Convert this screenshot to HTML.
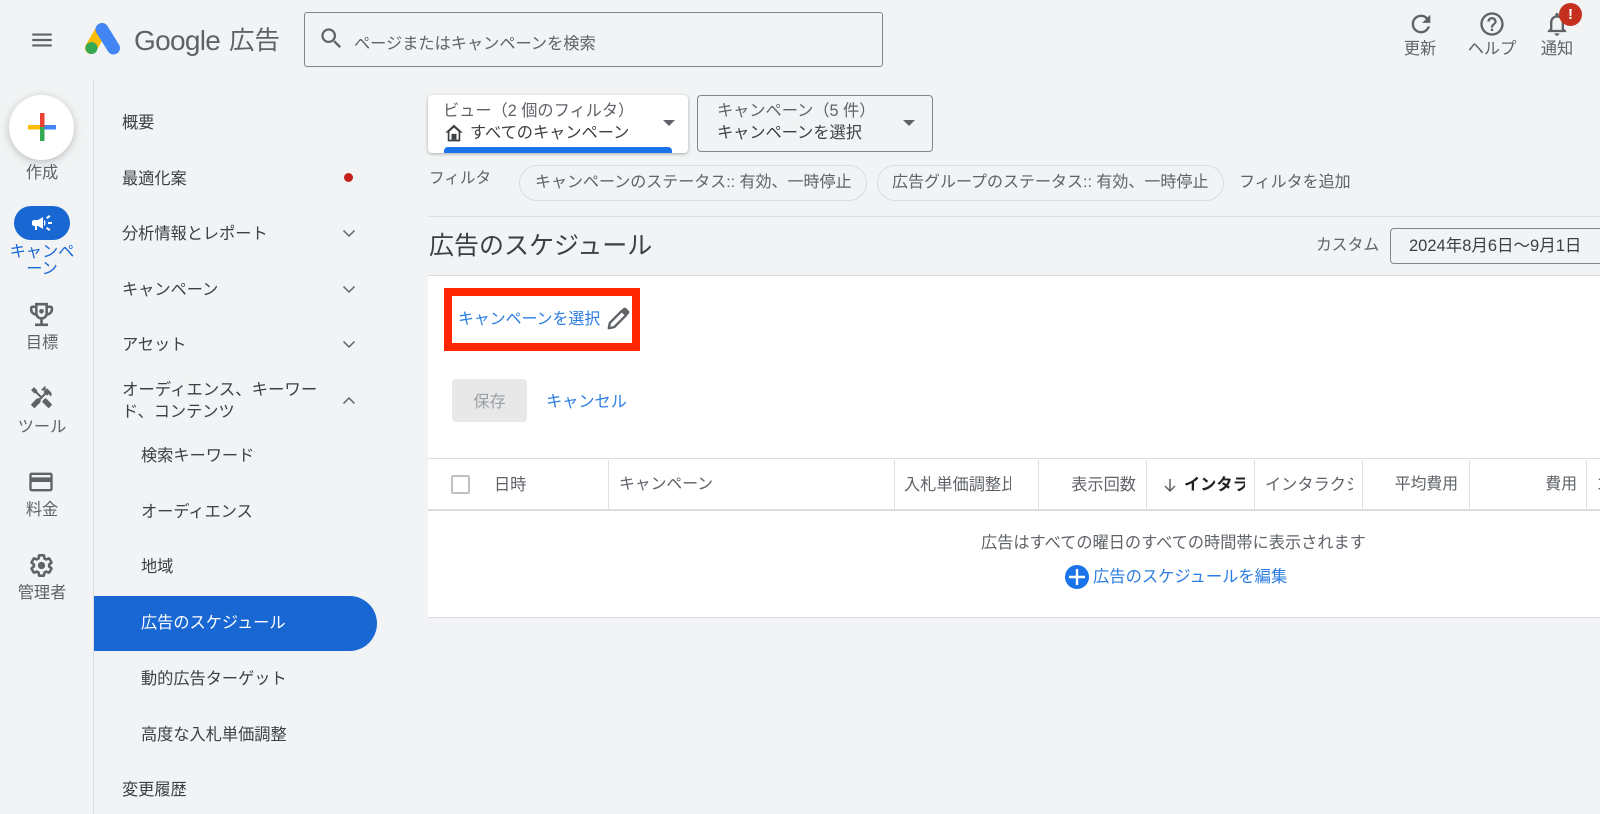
<!DOCTYPE html>
<html lang="ja"><head><meta charset="utf-8"><title>Google 広告</title>
<style>
html,body{margin:0;padding:0;width:1600px;height:814px;overflow:hidden;background:#f1f3f4}
body{position:relative;font-family:"Liberation Sans","Noto Sans CJK JP",sans-serif;font-size:16.2px;color:#3c4043}
.t{position:absolute;line-height:20px;height:20px;white-space:nowrap;margin-top:1px}
.b{position:absolute;box-sizing:border-box}
.g{color:#5f6368}.l{color:#2b7de2}
.c{text-align:center}
svg{position:absolute;display:block}
.sep{position:absolute;top:460px;height:50px;width:1px;background:#e0e0e0}
.h{position:absolute;top:476px;line-height:20px;height:20px;white-space:nowrap;overflow:hidden;color:#5f6368}
</style></head><body>

<svg style="left:29px;top:27px" width="26" height="26" viewBox="0 0 24 24" fill="#5f6368"><path d="M3 18h18v-2H3v2zm0-5h18v-2H3v2zm0-7v2h18V6H3z"/></svg>
<svg style="left:81px;top:20px" width="42" height="38" viewBox="80 20 42 38" fill="none" stroke-linecap="round">
<path d="M101 29L90 48" stroke="#fbbc04" stroke-width="12"/><path d="M101 29.500L112.500 48" stroke="#4285f4" stroke-width="13"/><circle cx="90.500" cy="48" r="6" fill="#34a853"/></svg>
<div class="t g" style="left:134px;top:25px;height:30px;line-height:30px;font-size:28px;letter-spacing:-.7px">Google</div>
<div class="t g" style="left:229px;top:25px;height:30px;line-height:30px;font-size:25.500px">広告</div>

<div class="b" style="left:304px;top:12px;width:579px;height:55px;border:1px solid #80868b;border-radius:3px"></div>
<svg style="left:318px;top:25px" width="27" height="27" viewBox="0 0 24 24" fill="#5f6368"><path d="M15.500 14h-.79l-.28-.27A6.471 6.471 0 0 0 16 9.500 6.500 6.500 0 1 0 9.500 16c1.610 0 3.090-.59 4.230-1.570l.27.28v.79l5 4.990L20.490 19l-4.990-5zm-6 0C7.010 14 5 11.990 5 9.500S7.010 5 9.500 5 14 7.010 14 9.500 11.990 14 9.500 14z"/></svg>
<div class="t g" style="left:354px;top:33px;font-size:16.200px">ページまたはキャンペーンを検索</div>

<svg style="left:1407px;top:10px" width="28" height="28" viewBox="0 0 24 24" fill="#5f6368"><path d="M17.650 6.350A7.958 7.958 0 0 0 12 4c-4.420 0-7.990 3.580-7.990 8s3.570 8 7.990 8c3.730 0 6.840-2.550 7.730-6h-2.080A5.990 5.990 0 0 1 12 18c-3.310 0-6-2.690-6-6s2.690-6 6-6c1.660 0 3.140.69 4.220 1.780L13 11h7V4l-2.350 2.350z"/></svg>
<div class="t g c" style="left:1400px;width:40px;top:38px">更新</div>
<svg style="left:1478px;top:10px" width="28" height="28" viewBox="0 0 24 24" fill="#5f6368"><path d="M11 18h2v-2h-2v2zm1-16C6.480 2 2 6.480 2 12s4.480 10 10 10 10-4.480 10-10S17.520 2 12 2zm0 18c-4.410 0-8-3.590-8-8s3.590-8 8-8 8 3.590 8 8-3.590 8-8 8zm0-14c-2.210 0-4 1.790-4 4h2c0-1.100.9-2 2-2s2 .9 2 2c0 2-3 1.750-3 5h2c0-2.250 3-2.500 3-5 0-2.210-1.790-4-4-4z"/></svg>
<div class="t g c" style="left:1461px;width:62px;top:38px">ヘルプ</div>
<svg style="left:1543px;top:10px" width="28" height="28" viewBox="0 0 24 24" fill="#5f6368"><path d="M12 22c1.100 0 2-.9 2-2h-4c0 1.100.9 2 2 2zm6-6v-5c0-3.070-1.630-5.640-4.500-6.320V4c0-.83-.67-1.500-1.500-1.500s-1.500.67-1.500 1.500v.68C7.640 5.360 6 7.920 6 11v5l-2 2v1h16v-1l-2-2zm-2 1H8v-6c0-2.480 1.510-4.500 4-4.500s4 2.020 4 4.500v6z"/></svg>
<div class="b" style="left:1559px;top:3px;width:23px;height:23px;border-radius:50%;background:#c5301f;color:#fff;font-weight:bold;font-size:15px;line-height:23px;text-align:center">!</div>
<div class="t g c" style="left:1537px;width:40px;top:38px">通知</div>

<!-- rail -->
<div class="b" style="left:93px;top:80px;width:1px;height:734px;background:#dadce0"></div>
<div class="b" style="left:9px;top:95px;width:65px;height:65px;border-radius:50%;background:#fff;box-shadow:0 2px 8px rgba(60,64,67,.3)"></div>
<svg style="left:28px;top:113px" width="28" height="28" viewBox="0 0 28 28">
<rect x="0" y="12" width="14" height="4.500" fill="#fbbc04"/><rect x="14" y="12" width="14" height="4.500" fill="#4285f4"/><rect x="12" y="14" width="4.500" height="14" fill="#34a853"/><rect x="12" y="0" width="4.500" height="14" fill="#ea4335"/></svg>
<div class="t g c" style="left:0;width:84px;top:162px">作成</div>

<div class="b" style="left:14px;top:206px;width:56px;height:34px;border-radius:17px;background:#1967d2"></div>
<svg style="left:30px;top:211px" width="24" height="24" viewBox="0 0 24 24" fill="#fff"><path d="M18 11v2h4v-2h-4zm-2 6.610c.96.71 2.210 1.650 3.200 2.390.4-.53.8-1.070 1.200-1.600-.99-.74-2.240-1.680-3.200-2.400-.4.54-.8 1.080-1.200 1.610zM20.400 5.600c-.4-.53-.8-1.070-1.200-1.600-.99.74-2.240 1.680-3.200 2.400.4.53.8 1.070 1.200 1.600.96-.72 2.210-1.650 3.200-2.400zM4 9c-1.100 0-2 .9-2 2v2c0 1.100.9 2 2 2h1v4h2v-4h1l5 3V6L8 9H4zm11.500 3c0-1.330-.58-2.530-1.500-3.350v6.690c.92-.81 1.500-2.010 1.500-3.340z"/></svg>
<div class="t c" style="left:0;width:84px;top:241px;color:#1967d2">キャンペ</div>
<div class="t c" style="left:0;width:84px;top:258px;color:#1967d2">ーン</div>

<svg style="left:26px;top:299px" width="31" height="31" viewBox="0 0 24 24" fill="#5f6368"><path d="M19 5h-2V3H7v2H5c-1.100 0-2 .9-2 2v1c0 2.550 1.920 4.630 4.390 4.940.63 1.500 1.980 2.630 3.610 2.960V19H7v2h10v-2h-4v-3.100c1.630-.33 2.980-1.460 3.610-2.960C19.080 12.630 21 10.550 21 8V7c0-1.100-.9-2-2-2zM5 8V7h2v3.820C5.840 10.400 5 9.300 5 8zm7 6c-1.650 0-3-1.350-3-3V5h6v6c0 1.650-1.350 3-3 3zm7-6c0 1.300-.84 2.400-2 2.820V7h2v1z"/><circle cx="12" cy="9.500" r="1.800"/></svg>
<div class="t g c" style="left:0;width:84px;top:332px">目標</div>

<svg style="left:29px;top:385px" width="25" height="25" viewBox="0 0 24 24" fill="#5f6368"><path d="M21.670 18.170l-5.300-5.300h-.99l-2.540 2.540v.99l5.300 5.300c.39.39 1.020.39 1.410 0l2.120-2.120c.39-.38.39-1.020 0-1.410z"/><path d="M17.340 10.190l1.410-1.410 2.120 2.120c1.170-1.170 1.170-3.070 0-4.240l-3.540-3.540-1.410 1.410V1.710l-.7-.71-3.540 3.540.71.71h2.830l-1.410 1.410 1.060 1.060-2.890 2.890-4.130-4.130V5.060L4.830 2.040 2 4.870 5.030 7.900h1.410l4.130 4.130-.85.85H7.610l-5.300 5.300c-.39.39-.39 1.020 0 1.410l2.120 2.120c.39.39 1.020.39 1.410 0l5.300-5.300v-2.120l5.150-5.150 1.050 1.050z"/></svg>
<div class="t g c" style="left:0;width:84px;top:416px">ツール</div>

<svg style="left:27px;top:468px" width="28" height="28" viewBox="0 0 24 24" fill="#5f6368"><path d="M20 4H4c-1.110 0-1.990.89-1.990 2L2 18c0 1.110.89 2 2 2h16c1.110 0 2-.89 2-2V6c0-1.110-.89-2-2-2zm0 14H4v-6h16v6zm0-10H4V6h16v2z"/></svg>
<div class="t g c" style="left:0;width:84px;top:499px">料金</div>

<svg style="left:27px;top:551px" width="29" height="29" viewBox="0 0 24 24"><path fill="none" stroke="#5f6368" stroke-width="2.400" transform="translate(12 12) scale(.88) translate(-12 -12)" d="M19.140 12.940c.04-.3.06-.61.06-.94 0-.32-.02-.64-.07-.94l2.030-1.580a.49.49 0 0 0 .12-.61l-1.920-3.320a.488.488 0 0 0-.59-.22l-2.390.96c-.5-.38-1.030-.7-1.620-.94l-.36-2.540a.484.484 0 0 0-.48-.41h-3.840c-.24 0-.43.17-.47.41l-.36 2.540c-.59.24-1.130.57-1.620.94l-2.390-.96c-.22-.08-.47 0-.59.22L2.740 8.870c-.12.21-.08.47.12.61l2.030 1.580c-.05.3-.09.63-.09.94s.02.64.07.94l-2.030 1.580a.49.49 0 0 0-.12.61l1.920 3.320c.12.22.37.29.59.22l2.390-.96c.5.38 1.030.7 1.620.94l.36 2.540c.05.24.24.41.48.41h3.840c.24 0 .44-.17.47-.41l.36-2.540c.59-.24 1.130-.56 1.620-.94l2.390.96c.22.08.47 0 .59-.22l1.920-3.320c.12-.22.07-.47-.12-.61l-2.010-1.580z"/><circle cx="12" cy="12" r="3" fill="#5f6368"/></svg>
<div class="t g c" style="left:0;width:84px;top:582px">管理者</div>

<!-- nav -->
<div class="t" style="left:122px;top:112px">概要</div>
<div class="t" style="left:122px;top:168px">最適化案</div>
<div class="b" style="left:344px;top:173px;width:9px;height:9px;border-radius:50%;background:#c5221f"></div>
<div class="t" style="left:122px;top:223px">分析情報とレポート</div>
<div class="t" style="left:122px;top:279px">キャンペーン</div>
<div class="t" style="left:122px;top:334px">アセット</div>
<div class="t" style="left:122px;top:379px;font-size:16.400px">オーディエンス、キーワー</div>
<div class="t" style="left:122px;top:401px">ド、コンテンツ</div>
<svg style="left:341px;top:225px" width="16" height="16" viewBox="0 0 16 16" fill="none" stroke="#5f6368" stroke-width="1.500"><path d="M2.500 5.500L8 11l5.500-5.500"/></svg>
<svg style="left:341px;top:281px" width="16" height="16" viewBox="0 0 16 16" fill="none" stroke="#5f6368" stroke-width="1.500"><path d="M2.500 5.500L8 11l5.500-5.500"/></svg>
<svg style="left:341px;top:336px" width="16" height="16" viewBox="0 0 16 16" fill="none" stroke="#5f6368" stroke-width="1.500"><path d="M2.500 5.500L8 11l5.500-5.500"/></svg>
<svg style="left:341px;top:393px" width="16" height="16" viewBox="0 0 16 16" fill="none" stroke="#5f6368" stroke-width="1.500"><path d="M2.500 10.500L8 5l5.500 5.500"/></svg>
<div class="t" style="left:141px;top:445px">検索キーワード</div>
<div class="t" style="left:141px;top:501px">オーディエンス</div>
<div class="t" style="left:141px;top:556px">地域</div>
<div class="b" style="left:94px;top:596px;width:283px;height:55px;background:#1967d2;border-radius:0 28px 28px 0"></div>
<div class="t" style="left:141px;top:612px;color:#fff">広告のスケジュール</div>
<div class="t" style="left:141px;top:668px">動的広告ターゲット</div>
<div class="t" style="left:141px;top:724px">高度な入札単価調整</div>
<div class="t" style="left:122px;top:779px">変更履歴</div>

<!-- view cards -->
<div class="b" style="left:428px;top:95px;width:260px;height:58px;background:#fff;border-radius:4px;box-shadow:0 1px 3px rgba(60,64,67,.4);overflow:hidden"><div class="b" style="left:16px;top:52px;width:228px;height:6px;background:#1a73e8;border-radius:4px 4px 0 0"></div></div>
<div class="t g" style="left:443px;top:100px">ビュー（2 個のフィルタ）</div>
<svg style="left:444px;top:123px" width="20" height="20" viewBox="0 0 24 24" fill="#3c4043"><path d="M12 2L1.500 11.500h3V22h15V11.500h3L12 2zm0 3.500l5.500 5V20h-11v-9.500L12 5.500z"/><rect x="9" y="13" width="6" height="7"/></svg>
<div class="t" style="left:470px;top:122px">すべてのキャンペーン</div>
<svg style="left:662px;top:119px" width="14" height="8" viewBox="0 0 14 8" fill="#5f6368"><path d="M1 1h12L7 7z"/></svg>
<div class="b" style="left:697px;top:95px;width:236px;height:57px;border:1px solid #80868b;border-radius:4px"></div>
<div class="t g" style="left:717px;top:100px">キャンペーン（5 件）</div>
<div class="t" style="left:717px;top:122px">キャンペーンを選択</div>
<svg style="left:902px;top:119px" width="14" height="8" viewBox="0 0 14 8" fill="#5f6368"><path d="M1 1h12L7 7z"/></svg>

<!-- filters -->
<div class="t g" style="left:429px;top:168px;font-size:15.600px">フィルタ</div>
<div class="b" style="left:519px;top:165px;width:348px;height:36px;border:1px solid #dadce0;border-radius:18px"></div>
<div class="t g" style="left:535px;top:172px;font-size:16px">キャンペーンのステータス:: 有効、一時停止</div>
<div class="b" style="left:877px;top:165px;width:347px;height:36px;border:1px solid #dadce0;border-radius:18px"></div>
<div class="t g" style="left:892px;top:172px;font-size:16px">広告グループのステータス:: 有効、一時停止</div>
<div class="t g" style="left:1239px;top:172px;font-size:16px">フィルタを追加</div>
<div class="b" style="left:429px;top:216px;width:1171px;height:1px;background:#dadce0"></div>

<div class="t" style="left:429px;top:230px;height:30px;line-height:30px;font-size:25px">広告のスケジュール</div>
<div class="t g" style="left:1316px;top:235px;font-size:15.800px">カスタム</div>
<div class="b" style="left:1390px;top:228px;width:230px;height:36px;border:1px solid #80868b;border-radius:4px"></div>
<div class="t" style="left:1409px;top:235px;font-size:16.500px">2024年8月6日～9月1日</div>

<!-- panel -->
<div class="b" style="left:428px;top:275px;width:1172px;height:343px;background:#fff;border-top:1px solid #dadce0;border-bottom:1px solid #dadce0"></div>
<div class="b" style="left:444px;top:288px;width:196px;height:63px;border:8px solid #ff2600;background:#fff"></div>
<div class="t l" style="left:458px;top:309px;font-size:15.900px">キャンペーンを選択</div>
<svg style="left:605px;top:306px" width="26" height="26" viewBox="0 0 24 24"><path d="M3.500 20.500l1-5L15.500 4.500l4 4L8.500 19.500z" fill="none" stroke="#5f6368" stroke-width="2.200" stroke-linejoin="round"/><path d="M15 4l2-2a2 2 0 0 1 2.500 0l2.500 2.500a2 2 0 0 1 0 2.500l-2 2z" fill="#5f6368"/></svg>
<div class="b" style="left:452px;top:379px;width:75px;height:43px;border-radius:4px;background:#e8e8e8"></div>
<div class="t c" style="left:452px;width:75px;top:391px;color:#9aa0a6">保存</div>
<div class="t l" style="left:546px;top:391px">キャンセル</div>

<div class="b" style="left:428px;top:458px;width:1172px;height:1px;background:#dadce0"></div>
<div class="b" style="left:428px;top:509px;width:1172px;height:2px;background:#dadce0"></div>
<div class="b" style="left:451px;top:475px;width:19px;height:19px;border:2px solid #bdc1c6;border-radius:2px"></div>
<div class="h" style="left:494px;top:475px">日時</div>
<div class="sep" style="left:608px"></div>
<div class="h" style="left:619px;top:475px;font-size:15.800px">キャンペーン</div>
<div class="sep" style="left:894px"></div>
<div class="h" style="left:904px;width:107px;top:475px">入札単価調整比</div>
<div class="sep" style="left:1038px"></div>
<div class="h" style="left:1050px;width:86px;text-align:right;top:475px">表示回数</div>
<div class="sep" style="left:1146px"></div>
<svg style="left:1162px;top:477px" width="16" height="16" viewBox="0 0 16 16" fill="none" stroke="#5f6368" stroke-width="1.500"><path d="M8 2v12M3 9l5 5 5-5"/></svg>
<div class="h" style="left:1184px;width:61px;font-weight:bold;color:#202124;top:475px">インタラクション</div>
<div class="sep" style="left:1254px"></div>
<div class="h" style="left:1265px;width:88px;top:475px">インタラクション率</div>
<div class="sep" style="left:1362px"></div>
<div class="h" style="left:1370px;width:88px;text-align:right;top:475px;font-size:15.800px">平均費用</div>
<div class="sep" style="left:1469px"></div>
<div class="h" style="left:1480px;width:97px;text-align:right;top:475px;font-size:15.800px">費用</div>
<div class="sep" style="left:1586px"></div>
<div class="h" style="left:1596px;width:4px;top:475px">コ</div>

<div class="t g" style="left:981px;top:532px">広告はすべての曜日のすべての時間帯に表示されます</div>
<svg style="left:1065px;top:565px" width="24" height="24" viewBox="0 0 24 24"><circle cx="12" cy="12" r="12" fill="#1a73e8"/><path d="M12 4v16M4 12h16" stroke="#fff" stroke-width="2.400"/></svg>
<div class="t l" style="left:1093px;top:566px;font-size:16.300px">広告のスケジュールを編集</div>
</body></html>
